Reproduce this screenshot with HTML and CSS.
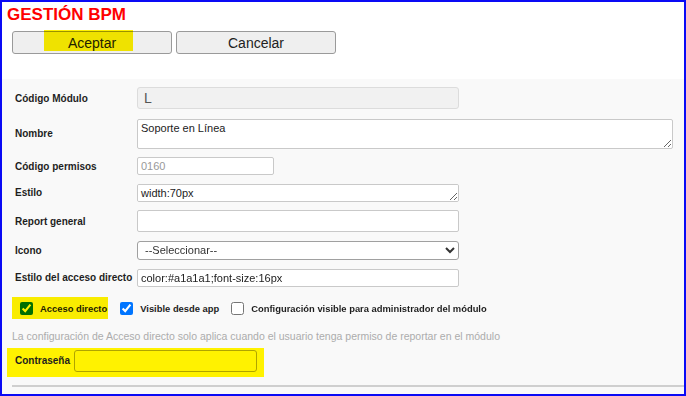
FILE: index.html
```html
<!DOCTYPE html>
<html lang="es">
<head>
  <meta charset="UTF-8">
  <title>Gestión BPM</title>
  <link rel="stylesheet" href="styles.css">
</head>
<body>

<div class="frame">
  <header class="top">
    <h1 class="title">GESTIÓN BPM</h1>
    <div class="actions">
      <button class="btn" type="button">Aceptar<span class="mark mark-btn"></span></button>
      <button class="btn" type="button">Cancelar</button>
    </div>
  </header>

  <form class="form">
    <div class="fields">
      <label class="lbl">Código Módulo</label>
      <input class="in in-off w-md h-22" value="L" disabled>

      <label class="lbl">Nombre</label>
      <textarea class="in ta w-lg h-30">Soporte en Línea</textarea>

      <label class="lbl">Código permisos</label>
      <input class="in in-ro w-sm h-18" value="0160" readonly>

      <label class="lbl">Estilo</label>
      <textarea class="in ta w-md h-18">width:70px</textarea>

      <label class="lbl">Report general</label>
      <input class="in w-md h-22" value="">

      <label class="lbl">Icono</label>
      <select class="in sel w-md h-19">
        <option>--Seleccionar--</option>
      </select>

      <label class="lbl">Estilo del acceso directo</label>
      <input class="in w-md h-18" value="color:#a1a1a1;font-size:16px">
    </div>

    <div class="checks">
      <label class="check check-hl">
        <input type="checkbox" checked>
        <span>Acceso directo</span>
        <span class="mark"></span>
      </label>
      <label class="check">
        <input type="checkbox" checked>
        <span>Visible desde app</span>
      </label>
      <label class="check">
        <input type="checkbox">
        <span>Configuración visible para administrador del módulo</span>
      </label>
    </div>

    <p class="note">La configuración de Acceso directo solo aplica cuando el usuario tenga permiso de reportar en el módulo</p>

    <div class="pass">
      <label class="lbl">Contraseña</label>
      <input class="in pass-in" type="password">
    </div>

    <div class="rule"></div>
  </form>
</div>

</body>
</html>
```

FILE: styles.css
```css
* {
  box-sizing: border-box;
}

body {
  margin: 0;
  font-family: "Liberation Sans", Arial, sans-serif;
  color: #222;
  background: #fff;
}

.frame {
  width: 686px;
  height: 396px;
  border: 2px solid #0a0af5;
  display: flex;
  flex-direction: column;
  overflow: hidden;
}

/* top bar */

.top {
  background: #fff;
  height: 77px;
  padding: 3px 0 0 5px;
}

.title {
  margin: 0;
  font-size: 17px;
  line-height: 20px;
  font-weight: bold;
  color: #ff0000;
}

.actions {
  display: flex;
  gap: 4px;
  margin: 6px 0 0 5px;
}

.btn {
  position: relative;
  width: 160px;
  height: 23px;
  padding: 0;
  font-family: "Liberation Sans", Arial, sans-serif;
  font-size: 14px;
  color: #222;
  background: #efefef;
  border: 1px solid #9a9a9a;
  border-radius: 3px;
}

.mark {
  position: absolute;
  background: #fff200;
  mix-blend-mode: multiply;
  pointer-events: none;
}

.mark-btn {
  left: 31px;
  top: -2px;
  width: 89px;
  height: 21px;
}

/* form */

.form {
  flex: 1;
  background: #f9f9f9;
  padding: 8px 0 0 10px;
  margin: 0;
}

.fields {
  display: grid;
  grid-template-columns: 122px auto;
  row-gap: 8.6px;
  align-items: center;
  padding-left: 3px;
}

.fields .h-30 {
  margin-top: 1px;
}

.lbl {
  font-size: 10px;
  font-weight: bold;
  color: #1e1e1e;
}

.in {
  display: block;
  margin: 0;
  font-family: "Liberation Sans", Arial, sans-serif;
  font-size: 11px;
  color: #222;
  background: #fff;
  border: 1px solid #c9c9c9;
  border-radius: 2px;
  padding: 0 3px;
  outline: none;
}

.in-off {
  background: #f1f1f1;
  border-color: #dcdcdc;
  border-radius: 3px;
  color: #555;
  font-size: 14px;
  padding-left: 6px;
}

.in-ro {
  color: #999;
}

.ta {
  padding: 2px 3px;
  line-height: 13px;
  resize: both;
}

.sel {
  border-color: #a0a0a0;
  border-radius: 3px;
  padding: 0 0 0 3px;
  color: #333;
}

.w-sm { width: 137px; }
.w-md { width: 322px; }
.w-lg { width: 536px; }

.h-18 { height: 18px; }
.h-19 { height: 19px; }
.h-22 { height: 22px; }
.h-30 { height: 30px; }

/* checkboxes */

.checks {
  display: flex;
  align-items: center;
  height: 22px;
  margin-top: 10px;
}

.check {
  position: relative;
  display: inline-flex;
  align-items: center;
  gap: 7px;
  height: 22px;
  padding-top: 2px;
  font-size: 9.4px;
  font-weight: bold;
  color: #1e1e1e;
  margin-left: 12px;
}

.check input {
  width: 13px;
  height: 13px;
  margin: 0;
}

.check-hl {
  margin-left: 0;
  padding: 2px 1px 0 8px;
}

.check-hl .mark {
  inset: 0;
}

.note {
  margin: 10px 0 0;
  font-size: 10.5px;
  line-height: 14px;
  color: #acacac;
}

/* password */

.pass {
  display: inline-flex;
  align-items: center;
  gap: 4px;
  height: 29px;
  margin: 5px 0 0 -5px;
  padding: 0 7px 3px 8px;
  background: #fff200;
}

.pass-in {
  width: 183px;
  height: 22px;
  background: transparent;
  border-color: #b0a400;
  border-radius: 3px;
}

.rule {
  height: 2px;
  margin-top: 8px;
  background: #cfcfcf;
}
```
